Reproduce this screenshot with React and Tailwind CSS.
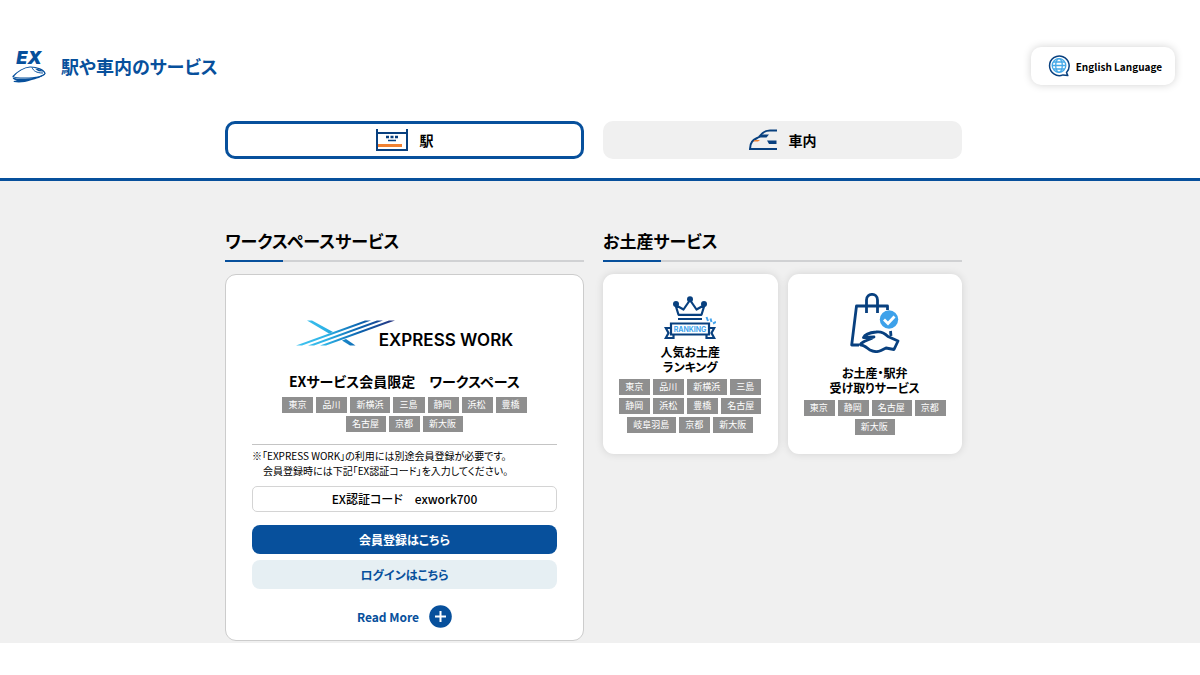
import React from 'react';

const workStations = ['東京', '品川', '新横浜', '三島', '静岡', '浜松', '豊橋', '名古屋', '京都', '新大阪'];
const rankingStations = ['東京', '品川', '新横浜', '三島', '静岡', '浜松', '豊橋', '名古屋', '岐阜羽島', '京都', '新大阪'];
const pickupStations = ['東京', '静岡', '名古屋', '京都', '新大阪'];

function ExLogo() {
  return (
    <span className="flex w-[34px] flex-col items-center text-[#07509c]">
      <span className="font-['Inter',sans-serif] text-[18px] leading-[16px] font-black italic">EX</span>
      <svg viewBox="0 0 34 17" className="h-[17px] w-[34px]" fill="none" stroke="currentColor">
        <path d="M1 10.500C5 6 12 1.500 18 1C25 0.800 32 4 33 7.500C31 11 22 12 13 12C6 12 2 12 1 10.500Z" strokeWidth="1.200" />
        <path d="M0.500 11.500C6 13.500 22 14 33.500 7.500C30 11.500 24 13 19 14.200C13 16 8 17.200 2 16L1.500 15L5 14.500C2.500 14 1 13.500 0.500 11.500Z" fill="currentColor" stroke="none" />
        <path d="M20 1.500C21.500 5 24.500 7 31 7" strokeWidth="1" />
        <path d="M23 2.800C27 3 30 4.300 31 5.500L26.500 5.200Z" fill="currentColor" stroke="none" />
      </svg>
    </span>
  );
}

function GlobeIcon() {
  return (
    <svg viewBox="0 0 22 22" className="h-[22px] w-[22px]" fill="none">
      <path d="M18.500 17.500A9.800 9.800 0 1 0 15 19.900L19.800 20.600Z" stroke="#08407f" strokeWidth="1.500" strokeLinejoin="round" />
      <g stroke="#45a9e8" strokeWidth="1.300">
        <circle cx="11" cy="10.500" r="6.800" />
        <ellipse cx="11" cy="10.500" rx="3.300" ry="6.800" />
        <path d="M4 10.500h14M5.300 7h11.400M5.300 14h11.400" />
      </g>
    </svg>
  );
}

function StationIcon() {
  return (
    <svg viewBox="0 0 32 24" className="h-[24px] w-[32px]" fill="none">
      <path d="M1 1v21h30V1M1 5h30" stroke="#08407f" strokeWidth="2" />
      <path d="M10 9h3M14.500 9h3M19 9h3" stroke="#08407f" strokeWidth="2.600" />
      <path d="M12 12.500h8" stroke="#08407f" strokeWidth="1.500" />
      <path d="M2 17.500h24" stroke="#f08030" strokeWidth="3" />
    </svg>
  );
}

function TrainIcon() {
  return (
    <svg viewBox="0 0 28 22" className="h-[22px] w-[28px]" fill="none">
      <path d="M28 1.500H21C14 1.500 13 5 10 8C6 10.500 1 11 1 20H28" stroke="#08407f" strokeWidth="2" />
      <path d="M9 8.500L13 5.500H20L17.500 8.500Z" fill="#08407f" />
      <path d="M4 12.500L6 11H11L9 12.500Z" fill="#f08030" />
      <path d="M18 11.500H27.500V15H20Z" fill="#08407f" />
    </svg>
  );
}

function ExpressWorkMark() {
  return (
    <svg viewBox="0 0 99 27" className="h-[27px] w-[99px]" fill="none">
      <defs>
        <linearGradient id="beam" gradientUnits="userSpaceOnUse" x1="0" y1="0" x2="99" y2="0">
          <stop offset="0" stopColor="#42c4f0" />
          <stop offset="0.300" stopColor="#2db2e6" />
          <stop offset="0.650" stopColor="#0b62ae" />
          <stop offset="1" stopColor="#27337f" />
        </linearGradient>
      </defs>
      <g fill="url(#beam)">
        <path d="M11 0.500H16L37 12L33 13.500Z" />
        <path d="M50 19L46 20.500L54 25.500H59.500Z" />
        <path d="M0 25.500H6L75 0.500H69Z" />
        <path d="M12 25.500H18L87 0.500H81Z" />
        <path d="M24 25.500H30L99 0.500H93Z" />
      </g>
    </svg>
  );
}

function RankingIcon() {
  return (
    <svg viewBox="0 0 52 44" className="h-[44px] w-[52px]" fill="none" stroke="#08407f" strokeWidth="2.200">
      <path d="M11.500 9L14.500 18.800H37.500L40.500 9L32.500 13.500L26 4L19.500 13.500Z" strokeLinejoin="round" />
      <g fill="#08407f" stroke="none">
        <circle cx="26" cy="3.200" r="3" />
        <circle cx="12" cy="8" r="3" />
        <circle cx="40" cy="8" r="3" />
      </g>
      <path d="M14 23h24" strokeWidth="2" />
      <path d="M7 27.500h38v11H7Z" />
      <path d="M7 32H1.800L4.500 37L1.800 42H9.500V38.500M45 32H50.200L47.500 37L50.200 42H42.500V38.500" />
      <path d="M42.500 21l1.500 4M46.500 22.500l1 3.500M49 27.500l3-1.500" stroke="#45a5ee" strokeWidth="2" />
      <text
        x="26"
        y="35.500"
        textAnchor="middle"
        fill="#45a5ee"
        stroke="none"
        className="font-['Inter',sans-serif] text-[7px] font-bold"
      >
        RANKING
      </text>
    </svg>
  );
}

function PickupIcon() {
  return (
    <svg viewBox="0 0 50 60" className="h-[60px] w-[50px]" fill="none" stroke="#08407f" strokeWidth="2.800">
      <path d="M9 52H1.700L6.500 13H37.500V17M40.500 38L41 43" strokeLinejoin="round" />
      <path d="M16.500 20V7C16.500 -0.500 27.500 -0.500 27.500 7V20" />
      <path
        d="M11 52C14 52 17 55 20 57C24 59 27 59.500 31 57.500L36 55L44 56.500L48 48L38 43.500C34 39.500 29 38.500 26 39C21 39.500 15 41 13.500 44.500L24 44C20 47 16 47 12.500 49.500C10 51 10 52 11 52Z"
        strokeLinejoin="round"
      />
      <circle cx="39" cy="26.500" r="9.200" fill="#3da1ea" stroke="none" />
      <path d="M34 26.500L38 30.500L44.500 23.500" stroke="#fff" strokeWidth="2.800" />
    </svg>
  );
}

function StationTags({ stations }) {
  return (
    <ul className="flex flex-wrap justify-center gap-[3px]">
      {stations.map((name) => (
        <li key={name} className="h-[16px] bg-[#8f8f8f] pr-[7px] pl-[6px] text-[9px] leading-[16px] text-white">
          {name}
        </li>
      ))}
    </ul>
  );
}

function SectionHeading({ children }) {
  return (
    <div>
      <h2 className="pb-[7px] text-[17px] leading-[24px] font-bold">{children}</h2>
      <div className="h-[2px] bg-[#d0d1d3]">
        <div className="h-full w-[58px] bg-[#07509c]" />
      </div>
    </div>
  );
}

function ServiceCard({ icon, lines, stations }) {
  return (
    <a
      href="#"
      className="flex min-h-[180px] flex-col items-center rounded-[11px] bg-white px-3.5 pb-4 shadow-[0_0_8px_rgba(0,0,0,0.12)]"
    >
      {icon}
      <h3 className="mb-[5px] text-center text-[12px] leading-[15px] font-bold">
        {lines.map((line) => (
          <span key={line} className="block">{line}</span>
        ))}
      </h3>
      <StationTags stations={stations} />
    </a>
  );
}

export default function App() {
  return (
    <div className="bg-white font-['Noto_Sans_CJK_JP',sans-serif] text-black [font-feature-settings:'palt']">
      <header className="border-b-[3px] border-[#07509c] pb-[19px]">
        <div className="flex items-center justify-between pt-[47px] pr-[25px] pl-[12px]">
          <h1 className="flex items-center gap-[15px] text-[18px] font-bold text-[#07509c]">
            <ExLogo />
            駅や車内のサービス
          </h1>
          <button
            type="button"
            className="flex h-[38px] items-center gap-[6px] rounded-[10px] bg-white pr-[13px] pl-[17px] text-[10px] font-bold shadow-[0_0_8px_rgba(0,0,0,0.18)]"
          >
            <GlobeIcon />
            English Language
          </button>
        </div>
        <nav className="mt-[36px] pr-[13px]">
          <div className="mx-auto grid max-w-[737px] grid-cols-2 gap-[19px] text-[14px] font-bold">
            <button
              type="button"
              className="flex h-[38px] items-center justify-center gap-[12px] rounded-[10px] border-[3px] border-[#07509c] bg-white"
            >
              <StationIcon />
              駅
            </button>
            <button type="button" className="flex h-[38px] items-center justify-center gap-[12px] rounded-[10px] bg-[#f0f0f0]">
              <TrainIcon />
              車内
            </button>
          </div>
        </nav>
      </header>

      <main className="bg-[#f0f0f0] pt-[48px] pr-[13px] pb-[2px]">
        <div className="mx-auto grid max-w-[737px] grid-cols-2 items-start gap-[19px]">
          <section>
            <SectionHeading>ワークスペースサービス</SectionHeading>
            <div className="mt-[12px] rounded-[11px] border border-[#ccc] bg-white px-[26px] pb-[12px]">
              <div className="flex items-end justify-center pt-[45px]">
                <ExpressWorkMark />
                <span className="-ml-[16px] font-['Inter',sans-serif] text-[17px] leading-[14px] font-semibold">EXPRESS WORK</span>
              </div>
              <h3 className="mt-[24px] text-center text-[14px] leading-[20px] font-bold">EXサービス会員限定　ワークスペース</h3>
              <div className="mx-auto mt-[6px] max-w-[260px]">
                <StationTags stations={workStations} />
              </div>
              <div className="mt-[12px] border-t border-[#c4c4c4] pt-[3px] text-[10px] leading-[15px]">
                <p>※「EXPRESS WORK」の利用には別途会員登録が必要です。</p>
                <p className="pl-[11px]">会員登録時には下記「EX認証コード」を入力してください。</p>
              </div>
              <p className="mt-[8px] rounded-[5px] border border-[#d4d4d4] text-center text-[12px] leading-[24px] font-medium">
                EX認証コード　exwork700
              </p>
              <a href="#" className="mt-[13px] block rounded-[8px] bg-[#07509c] text-center text-[12px] leading-[29px] font-bold text-white">
                会員登録はこちら
              </a>
              <a href="#" className="mt-[6px] block rounded-[8px] bg-[#e6eff3] text-center text-[12px] leading-[29px] font-bold text-[#07509c]">
                ログインはこちら
              </a>
              <button type="button" className="mx-auto mt-[16px] flex items-center gap-[10px] text-[12px] leading-[23px] font-bold text-[#07509c]">
                Read More
                <svg viewBox="0 0 23 23" className="h-[23px] w-[23px]">
                  <circle cx="11.500" cy="11.500" r="11.300" fill="#07509c" />
                  <path d="M11.500 6v11M6 11.500h11" stroke="#fff" strokeWidth="2" />
                </svg>
              </button>
            </div>
          </section>

          <section>
            <SectionHeading>お土産サービス</SectionHeading>
            <div className="mt-[12px] grid grid-cols-2 gap-[10px]">
              <ServiceCard
                icon={<div className="pt-[22px] pb-[4px]"><RankingIcon /></div>}
                lines={['人気お土産', 'ランキング']}
                stations={rankingStations}
              />
              <ServiceCard
                icon={<div className="pt-[19px] pb-[12px]"><PickupIcon /></div>}
                lines={['お土産・駅弁', '受け取りサービス']}
                stations={pickupStations}
              />
            </div>
          </section>
        </div>
      </main>
    </div>
  );
}
